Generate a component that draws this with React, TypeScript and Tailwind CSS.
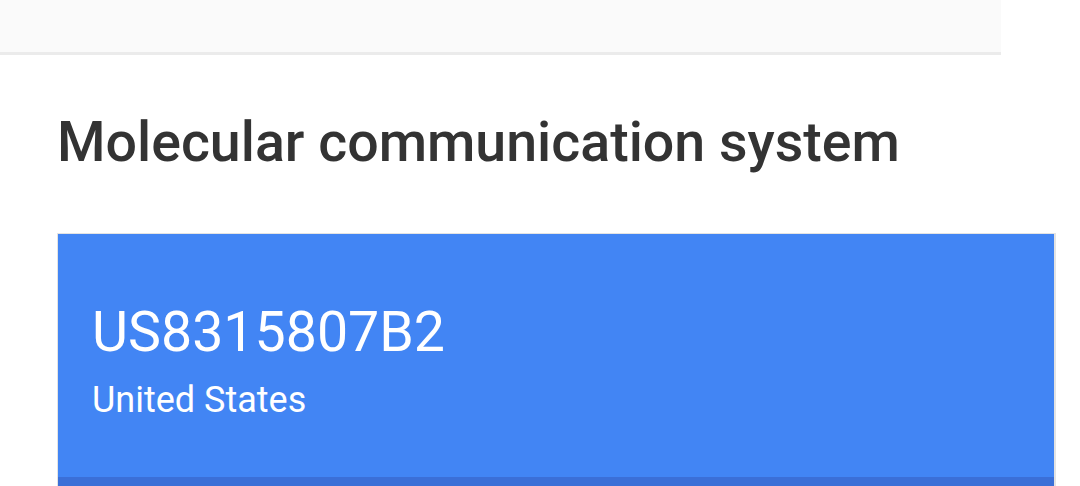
import React from 'react';

const App: React.FC = () => {
  return (
    <div className="h-[486px] w-[1080px] overflow-hidden bg-white" style={{ fontFamily: 'Roboto, "Liberation Sans", sans-serif' }}>
      {/* top toolbar */}
      <div className="h-[55px] w-[1001px] border-b-[3px] border-[#ebebeb] bg-[#fafafa]"></div>

      <h1 className="ml-[57px] mt-[60px] text-[55.5px] font-medium leading-none text-[#333333]">
        Molecular communication system
      </h1>

      <div className="ml-[57px] mt-[62px] w-[999px] border-l border-t border-r-2 border-[#e3e3e3]">
        <div className="bg-[#4285f4] pl-[34px] pt-[71px] pb-[59px] text-white">
          <div className="text-[55.5px] leading-none">US8315807B2</div>
          <div className="mt-[22px] text-[36px] leading-none">United States</div>
        </div>
        <div className="h-[40px] bg-[#3b6fd7]"></div>
      </div>
    </div>
  );
};

export default App;
